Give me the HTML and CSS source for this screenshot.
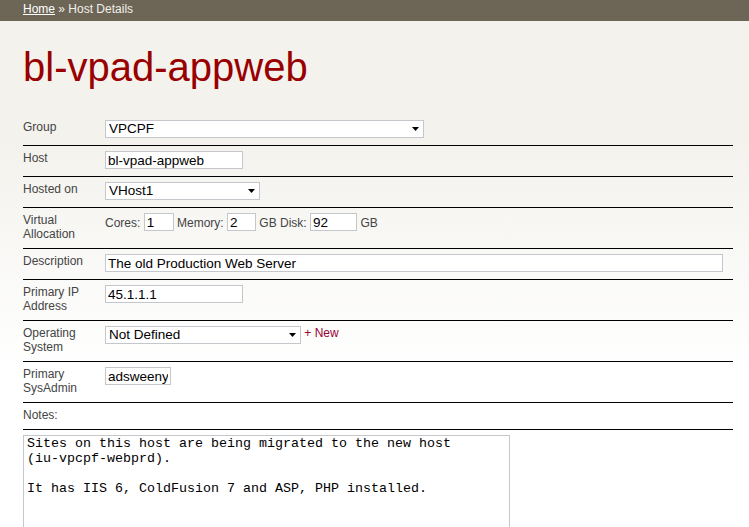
FILE: index.html
```html
<!DOCTYPE html>
<html>
<head>
<meta charset="utf-8">
<title>Host Details</title>
<link rel="stylesheet" href="styles.css">
</head>
<body>
<div class="topbar"><a href="#" class="crumb-link">Home</a> » Host Details</div>
<div class="page">
  <h1 class="title">bl-vpad-appweb</h1>
  <div class="form">
    <div class="row">
      <div class="label">Group</div>
      <div class="field"><span class="sel"><select class="select w-group"><option>VPCPF</option></select></span></div>
    </div>
    <div class="row">
      <div class="label">Host</div>
      <div class="field"><input class="input w-host" type="text" value="bl-vpad-appweb"></div>
    </div>
    <div class="row">
      <div class="label">Hosted on</div>
      <div class="field"><span class="sel"><select class="select w-hosted"><option>VHost1</option></select></span></div>
    </div>
    <div class="row">
      <div class="label">Virtual<br>Allocation</div>
      <div class="field inline">Cores: <input class="input w-cores" type="text" value="1"> Memory: <input class="input w-mem" type="text" value="2"> GB Disk: <input class="input w-disk" type="text" value="92"> GB</div>
    </div>
    <div class="row">
      <div class="label">Description</div>
      <div class="field"><input class="input w-desc" type="text" value="The old Production Web Server"></div>
    </div>
    <div class="row">
      <div class="label">Primary IP<br>Address</div>
      <div class="field"><input class="input w-host" type="text" value="45.1.1.1"></div>
    </div>
    <div class="row">
      <div class="label">Operating<br>System</div>
      <div class="field"><span class="sel"><select class="select w-os"><option>Not Defined</option></select></span> <a href="#" class="new-link">+ New</a></div>
    </div>
    <div class="row">
      <div class="label">Primary<br>SysAdmin</div>
      <div class="field"><input class="input w-admin" type="text" value="adsweeny"></div>
    </div>
    <div class="row">
      <div class="label">Notes:</div>
      <div class="field"></div>
    </div>
  </div>
  <textarea class="notes">Sites on this host are being migrated to the new host
(iu-vpcpf-webprd).

It has IIS 6, ColdFusion 7 and ASP, PHP installed.</textarea>
</div>
</body>
</html>
```
FILE: styles.css
```css
html, body {
  margin: 0;
  padding: 0;
}
body {
  font-family: "Liberation Sans", Arial, sans-serif;
  font-size: 12px;
  color: #444;
  background: linear-gradient(to bottom, #6d6656 0, #6d6656 21px, #f3f2ed 21px, #f3f2ed 140px, #ffffff 370px);
  min-height: 100vh;
}
.topbar {
  height: 21px;
  line-height: 18px;
  padding-left: 23px;
  color: #f0efe9;
  font-size: 12px;
}
.crumb-link {
  color: #ffffff;
  text-decoration: underline;
}
.page {
  padding: 0 16px 0 23px;
}
.title {
  margin: 24px 0 25px;
  font-size: 40px;
  line-height: 45px;
  font-weight: normal;
  color: #990000;
}
.form {
  display: flex;
  flex-direction: column;
}
.row {
  display: grid;
  grid-template-columns: 82px 1fr;
  padding: 5px 0 7px;
  border-bottom: 1px solid #000;
}
.label {
  line-height: 14px;
  color: #444;
}
.field {
  line-height: 18px;
  color: #444;
}
.inline {
  line-height: 14px;
}
.input,
.select {
  box-sizing: border-box;
  height: 18px;
  margin: 0;
  border: 1px solid #c4c8cc;
  background: #fff;
  font-family: "Liberation Sans", Arial, sans-serif;
  font-size: 13.5px;
  color: #000;
  padding: 0 2px;
  vertical-align: top;
  border-radius: 0;
  outline: none;
}
.inline .input {
  vertical-align: baseline;
}
.select {
  -webkit-appearance: none;
  appearance: none;
  padding: 0 3px;
  line-height: 16px;
}
.sel {
  position: relative;
  display: inline-block;
  vertical-align: top;
  height: 18px;
}
.sel::after {
  content: "";
  position: absolute;
  right: 5px;
  top: 7px;
  width: 7px;
  height: 4px;
  background: #000;
  clip-path: polygon(0 0, 100% 0, 50% 100%);
}
.w-group { width: 319px; }
.w-hosted { width: 155px; }
.w-os { width: 196px; }
.w-host { width: 138px; }
.w-admin { width: 66px; }
.w-desc { width: 618px; }
.w-cores { width: 30px; }
.w-mem { width: 29px; }
.w-disk { width: 47px; }
.new-link {
  color: #990033;
  text-decoration: none;
  font-size: 12px;
  vertical-align: top;
  line-height: 14px;
}
.notes {
  display: block;
  box-sizing: border-box;
  margin: 5px 0 0;
  width: 487px;
  height: 93px;
  border: 1px solid #c4c8cc;
  background: #fff;
  padding: 0 3px;
  font-family: "Liberation Mono", "Courier New", monospace;
  font-size: 13.33px;
  line-height: 15px;
  color: #000;
  resize: none;
  overflow: hidden;
}
```
